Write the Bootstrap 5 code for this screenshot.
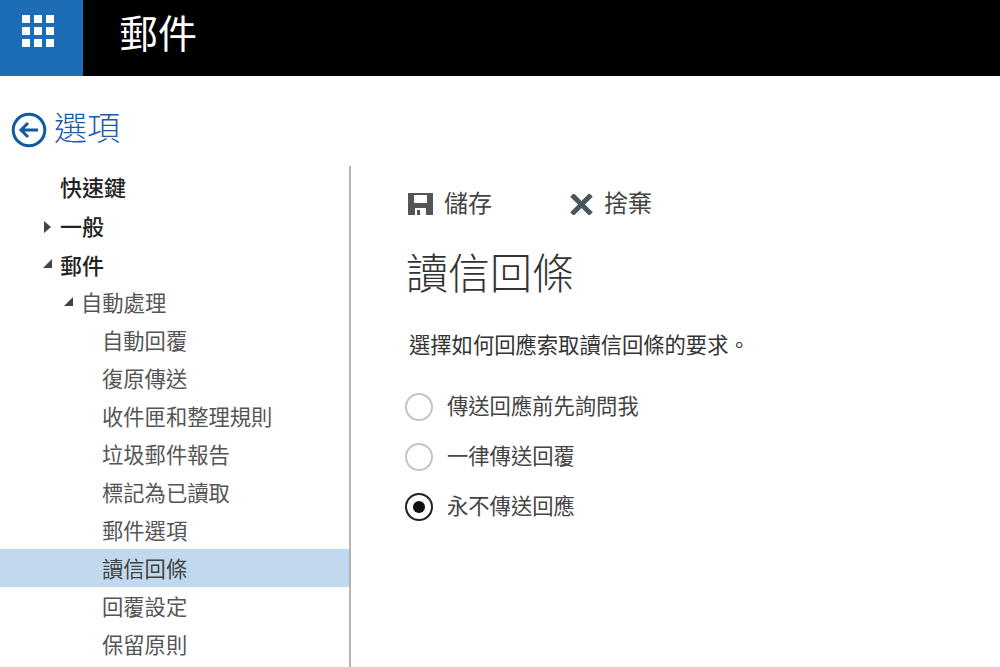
<!DOCTYPE html>
<html lang="zh-Hant">
<head>
  <meta charset="UTF-8">
  <title>郵件 - 選項</title>
  <link href="https://cdn.jsdelivr.net/npm/bootstrap@5.3.3/dist/css/bootstrap.min.css" rel="stylesheet">
  <style>
    html, body { height: 667px; overflow: hidden; }
    body { font-family: "Liberation Sans", "Noto Sans CJK TC", sans-serif; color: #333; background: #fff; }
    .top-bar { height: 76px; background: #000; }
    .app-tile { width: 83px; background: #1c6db5; padding: 15px 0 0 22px; }
    .app-title { font-size: 39px; line-height: 1; color: #fff; margin: 0 0 0 36px; padding-top: 15px; font-weight: 400; }
    .opt-head { height: 90px; padding: 33px 0 0 11px; gap: 7px; }
    .opt-icon { margin-top: 3px; flex: none; }
    .opt-title { font-size: 33px; line-height: 40px; color: #1f5ba8; font-weight: 300; }
    .side-pane { width: 351px; height: 501px; border-right: 2px solid #b4b4b4; padding-top: 3px; flex: none; }
    .tree-row { height: 38px; line-height: 42px; font-size: 21.3px; white-space: nowrap; color: #555; font-weight: 400; position: relative; }
    .tree-row.is-first { line-height: 40px; }
    .lvl-1 { padding-left: 60px; font-size: 22px; color: #222; font-weight: 500; }
    .lvl-1.is-deep { line-height: 44px; }
    .lvl-2 { padding-left: 81px; }
    .lvl-3 { padding-left: 102px; }
    .tree-row.is-active { background: #c0d9ee; color: #444; }
    .tree-arrow { position: absolute; top: 14px; }
    .main-pane { padding: 16px 0 0 57px; }
    .tool-btn { font-size: 24px; line-height: 44px; color: #444; font-weight: 400; gap: 11px; }
    .tool-gap { margin-left: 78px; }
    .page-title { font-size: 42px; line-height: 60px; color: #333; font-weight: 300; margin: 19px 0 0 -2px; }
    .page-desc { font-size: 21.3px; line-height: 30px; color: #333; margin: 26px 0 0 1px; font-weight: 400; }
    .opt-list { margin-top: 31px; gap: 20px; }
    .opt-item { height: 30px; line-height: 32px; font-size: 21.3px; color: #444; gap: 14px; font-weight: 400; }
    .ring { width: 28px; height: 28px; border: 2px solid #c4c4c4; border-radius: 50%; background: #fff; flex: none; margin-left: -3px; }
    .ring.is-on { border-color: #222; display: flex; align-items: center; justify-content: center; }
    .ring.is-on::after { content: ""; width: 12px; height: 12px; border-radius: 50%; background: #111; }
  </style>
</head>
<body>
  <div class="top-bar d-flex">
    <div class="app-tile">
      <svg width="33" height="33" viewBox="0 0 33 33" fill="#fff">
        <rect x="0" y="0" width="8" height="8"/><rect x="12" y="0" width="8" height="8"/><rect x="24" y="0" width="8" height="8"/>
        <rect x="0" y="12" width="8" height="8"/><rect x="12" y="12" width="8" height="8"/><rect x="24" y="12" width="8" height="8"/>
        <rect x="0" y="24" width="8" height="8"/><rect x="12" y="24" width="8" height="8"/><rect x="24" y="24" width="8" height="8"/>
      </svg>
    </div>
    <div class="app-title">郵件</div>
  </div>

  <div class="opt-head d-flex align-items-start">
    <svg class="opt-icon" width="36" height="36" viewBox="0 0 36 36" fill="none" stroke="#0f5aa3">
      <circle cx="18" cy="18" r="15.8" stroke-width="3"/>
      <path d="M27 18H10M17 11l-7 7 7 7" stroke-width="3"/>
    </svg>
    <div class="opt-title">選項</div>
  </div>

  <div class="d-flex">
    <div class="side-pane">
      <div class="tree-row lvl-1 is-first">快速鍵</div>
      <div class="tree-row lvl-1">
        <svg class="tree-arrow" style="left:44px" width="7" height="12" viewBox="0 0 7 12" fill="#444"><path d="M0 0l7 6-7 6z"/></svg>一般</div>
      <div class="tree-row lvl-1 is-deep">
        <svg class="tree-arrow" style="left:43px" width="9" height="9" viewBox="0 0 9 9" fill="#444"><path d="M9 0v9H0z"/></svg>郵件</div>
      <div class="tree-row lvl-2">
        <svg class="tree-arrow" style="left:64px" width="9" height="9" viewBox="0 0 9 9" fill="#444"><path d="M9 0v9H0z"/></svg>自動處理</div>
      <div class="tree-row lvl-3">自動回覆</div>
      <div class="tree-row lvl-3">復原傳送</div>
      <div class="tree-row lvl-3">收件匣和整理規則</div>
      <div class="tree-row lvl-3">垃圾郵件報告</div>
      <div class="tree-row lvl-3">標記為已讀取</div>
      <div class="tree-row lvl-3">郵件選項</div>
      <div class="tree-row lvl-3 is-active">讀信回條</div>
      <div class="tree-row lvl-3">回覆設定</div>
      <div class="tree-row lvl-3">保留原則</div>
    </div>

    <div class="main-pane flex-grow-1">
      <div class="d-flex align-items-center">
        <div class="tool-btn d-flex align-items-center">
          <svg width="25" height="22" viewBox="0 0 25 22" fill="#555"><path fill-rule="evenodd" d="M0 0h25v22H0zM6 2v8h13V2zM7 15v7h11v-7zM9 17h3v5H9z"/></svg>
          <span>儲存</span>
        </div>
        <div class="tool-btn tool-gap d-flex align-items-center">
          <svg width="23" height="21" viewBox="0 0 23 21" stroke="#4a5560" stroke-width="5" fill="none"><path d="M2 1l19 19M21 1L2 20"/></svg>
          <span>捨棄</span>
        </div>
      </div>
      <h1 class="page-title">讀信回條</h1>
      <p class="page-desc">選擇如何回應索取讀信回條的要求。</p>
      <div class="opt-list d-flex flex-column">
        <div class="opt-item d-flex align-items-center"><span class="ring"></span>傳送回應前先詢問我</div>
        <div class="opt-item d-flex align-items-center"><span class="ring"></span>一律傳送回覆</div>
        <div class="opt-item d-flex align-items-center"><span class="ring is-on"></span>永不傳送回應</div>
      </div>
    </div>
  </div>

  <script src="https://cdn.jsdelivr.net/npm/bootstrap@5.3.3/dist/js/bootstrap.bundle.min.js"></script>
</body>
</html>
